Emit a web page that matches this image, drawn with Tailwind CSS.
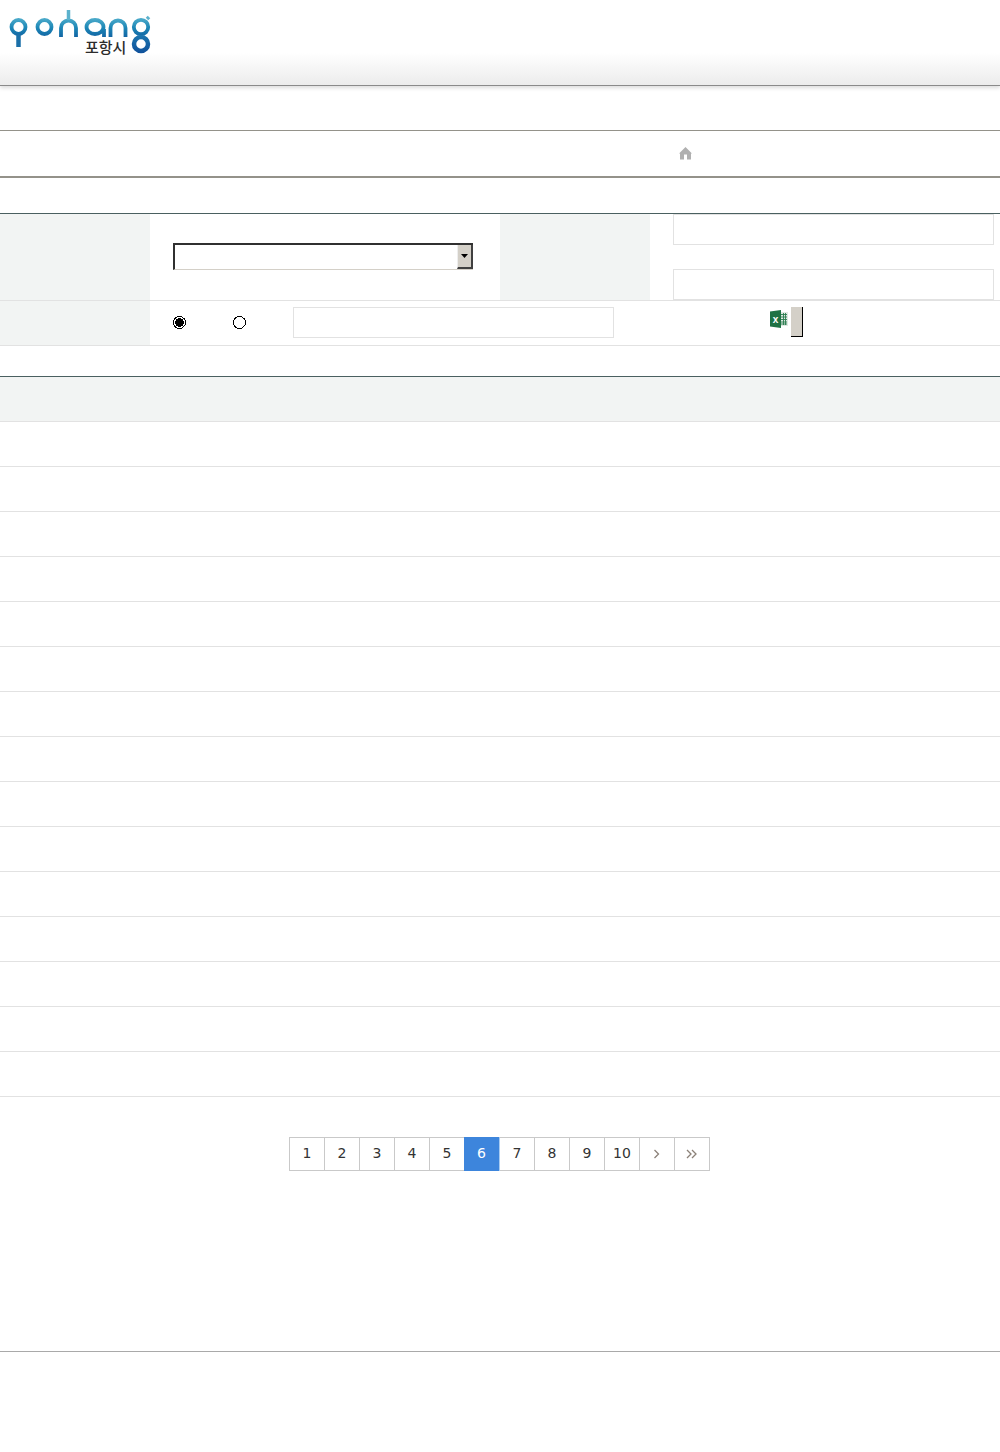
<!DOCTYPE html>
<html lang="ko">
<head>
  <meta charset="UTF-8" />
  <title>포항시</title>
  <script src="https://cdn.jsdelivr.net/npm/@tailwindcss/browser@4"></script>
</head>
<body class="bg-white text-[#333] font-['DejaVu_Sans',sans-serif] h-[1452px] overflow-hidden">

  <!-- Header -->
  <header class="h-[86px] border-b border-[#8a8a8a] bg-gradient-to-b from-white from-[62%] to-[#ececec] shadow-[0_2px_4px_rgba(0,0,0,0.14)]">
    <div class="relative w-[160px] h-[60px]">
      <svg width="160" height="60" viewBox="0 0 160 60" fill="none" class="absolute left-0 top-0">
        <defs>
          <linearGradient id="logoBlue" gradientUnits="userSpaceOnUse" x1="0" y1="16" x2="0" y2="40">
            <stop offset="0" stop-color="#58b4cf" />
            <stop offset="0.5" stop-color="#1c86b6" />
            <stop offset="1" stop-color="#0f5a9e" />
          </linearGradient>
          <linearGradient id="logoDark" gradientUnits="userSpaceOnUse" x1="0" y1="34" x2="0" y2="54">
            <stop offset="0" stop-color="#1c78b0" />
            <stop offset="1" stop-color="#0f4f9a" />
          </linearGradient>
        </defs>
        <g stroke="url(#logoBlue)" stroke-width="3.8">
          <circle cx="18.5" cy="27" r="7" />
          <path d="M18.5 33V47" stroke="#1a6fa8" stroke-width="4.5" />
          <circle cx="44.5" cy="27" r="7" />
          <path d="M61 37V28a7.5 7.5 0 0 1 15 0V37" />
          <path d="M68.5 10V20" stroke="#5cb2cd" stroke-width="3.5" />
          <ellipse cx="95" cy="27" rx="8.5" ry="7" />
          <path d="M104 29V37" />
          <path d="M110.5 37V28a7.5 7.5 0 0 1 15 0V37" />
          <circle cx="141" cy="27" r="7.2" />
          <path d="M147 19L149 17" stroke="#5cb2cd" stroke-width="3.5" />
        </g>
        <circle cx="141" cy="44" r="7" stroke="url(#logoDark)" stroke-width="4.5" />
      </svg>
      <span class="absolute left-[85px] top-[37px] text-[15px] leading-[20px] font-medium text-[#2c2c2c] font-['Noto_Sans_CJK_KR',sans-serif]">포항시</span>
    </div>
  </header>

  <!-- Breadcrumb -->
  <section class="mt-[44px] h-[48px] border-t border-b-2 border-t-[#94928a] border-b-[#94928a] flex items-center pl-[679px]">
    <svg width="13" height="13" viewBox="0 0 13 13" class="mt-[-1px]"><path d="M6.5 0L13 6.5H12V12.5H8V7.5H5V12.5H1V6.5H0Z" fill="#b0b0b0" /></svg>
  </section>

  <!-- Search form -->
  <section class="mt-[35px] border-t border-[#4a6060]">
    <div class="flex h-[87px] border-b border-[#e2e2e2]">
      <div class="w-[150px] bg-[#f2f4f3]"></div>
      <div class="w-[350px] pl-[23px] pt-[29px]">
        <div class="w-[300px] h-[27px] flex justify-end border-t-2 border-l-2 border-t-[#303030] border-l-[#303030] border-b border-b-[#d4d0c8]">
          <div class="w-[16px] h-[24px] bg-[#d4d0c8] border-r-2 border-b-2 border-r-[#404040] border-b-[#404040] border-l border-l-[#eee] flex items-center justify-center">
            <svg width="7" height="4" viewBox="0 0 7 4"><path d="M0 0H7L3.5 4Z" fill="#000" /></svg>
          </div>
        </div>
      </div>
      <div class="w-[150px] bg-[#f2f4f3]"></div>
      <div class="flex-1 pl-[23px] flex flex-col justify-between">
        <div class="w-[321px] h-[31px] border border-[#e2e2e2]"></div>
        <div class="w-[321px] h-[31px] border border-[#e2e2e2]"></div>
      </div>
    </div>
    <div class="flex h-[45px] border-b border-[#e2e2e2]">
      <div class="w-[150px] bg-[#f2f4f3]"></div>
      <div class="flex-1 flex items-start">
        <svg width="13" height="13" viewBox="0 0 13 13" shape-rendering="crispEdges" class="ml-[23px] mt-[15px]">
          <circle cx="6.5" cy="6.5" r="6" fill="#fff" stroke="#000" />
          <circle cx="6.5" cy="6.5" r="4.4" fill="#000" />
        </svg>
        <svg width="13" height="13" viewBox="0 0 13 13" shape-rendering="crispEdges" class="ml-[47px] mt-[15px]">
          <circle cx="6.5" cy="6.5" r="6" fill="#fff" stroke="#000" />
        </svg>
        <div class="w-[321px] h-[31px] border border-[#e2e2e2] ml-[47px] mt-[6px]"></div>
        <svg width="18" height="18" viewBox="0 0 18 18" class="ml-[156px] mt-[9px]">
          <path d="M10 2H18V16H10Z" fill="#dfe8e2" />
          <path d="M11 4.5H17M11 7H17M11 9.5H17M11 12H17M11 14H17M13.5 3V15M15.5 3V15" stroke="#2a7d4f" stroke-width="0.9" />
          <path d="M0 1.5L11 0V18L0 16.5Z" fill="#1f7244" />
          <text x="5.5" y="12.5" text-anchor="middle" fill="#fff" font-size="10" font-weight="700" font-family="Liberation Sans, sans-serif">x</text>
        </svg>
        <div class="w-[12px] h-[30px] ml-[3px] mt-[6px] bg-[#d4d0c8] border-r border-b border-r-black border-b-black"></div>
      </div>
    </div>
  </section>

  <!-- List -->
  <section class="mt-[30px] border-t border-[#4a6060]">
    <div class="h-[45px] bg-[#f2f4f3] border-b border-[#e2e2e2]"></div>
    <div class="h-[45px] border-b border-[#e2e2e2]"></div>
    <div class="h-[45px] border-b border-[#e2e2e2]"></div>
    <div class="h-[45px] border-b border-[#e2e2e2]"></div>
    <div class="h-[45px] border-b border-[#e2e2e2]"></div>
    <div class="h-[45px] border-b border-[#e2e2e2]"></div>
    <div class="h-[45px] border-b border-[#e2e2e2]"></div>
    <div class="h-[45px] border-b border-[#e2e2e2]"></div>
    <div class="h-[45px] border-b border-[#e2e2e2]"></div>
    <div class="h-[45px] border-b border-[#e2e2e2]"></div>
    <div class="h-[45px] border-b border-[#e2e2e2]"></div>
    <div class="h-[45px] border-b border-[#e2e2e2]"></div>
    <div class="h-[45px] border-b border-[#e2e2e2]"></div>
    <div class="h-[45px] border-b border-[#e2e2e2]"></div>
    <div class="h-[45px] border-b border-[#e2e2e2]"></div>
    <div class="h-[45px] border-b border-[#e2e2e2]"></div>
  </section>

  <!-- Pagination -->
  <nav class="mt-[40px] ml-[289px] flex w-[421px] h-[34px] border border-[#c9c9c9] text-[14px] leading-[30px] text-center">
    <a class="w-[35px] border-r border-[#c9c9c9]">1</a>
    <a class="w-[35px] border-r border-[#c9c9c9]">2</a>
    <a class="w-[35px] border-r border-[#c9c9c9]">3</a>
    <a class="w-[35px] border-r border-[#c9c9c9]">4</a>
    <a class="w-[34px] border-r-0 border-[#c9c9c9]">5</a>
    <a class="w-[36px] h-[34px] -my-px leading-[32px] bg-[#3d85dc] text-white border-r border-[#a9ccf2]">6</a>
    <a class="w-[35px] border-r border-[#c9c9c9]">7</a>
    <a class="w-[35px] border-r border-[#c9c9c9]">8</a>
    <a class="w-[35px] border-r border-[#c9c9c9]">9</a>
    <a class="w-[35px] border-r border-[#c9c9c9]">10</a>
    <a class="w-[35px] border-r border-[#c9c9c9] flex items-center justify-center">
      <svg width="7" height="10" viewBox="0 0 7 10" fill="none" stroke="#8b8178" stroke-width="1.3" class="-ml-[2px]"><path d="M1.5 1L5.5 5L1.5 9" /></svg>
    </a>
    <a class="flex-1 flex items-center justify-center">
      <svg width="12" height="10" viewBox="0 0 12 10" fill="none" stroke="#8b8178" stroke-width="1.3"><path d="M1 1L5 5L1 9M6 1L10 5L6 9" /></svg>
    </a>
  </nav>

  <!-- Footer -->
  <footer class="mt-[180px] border-t border-[#a9a9a9]"></footer>

</body>
</html>
